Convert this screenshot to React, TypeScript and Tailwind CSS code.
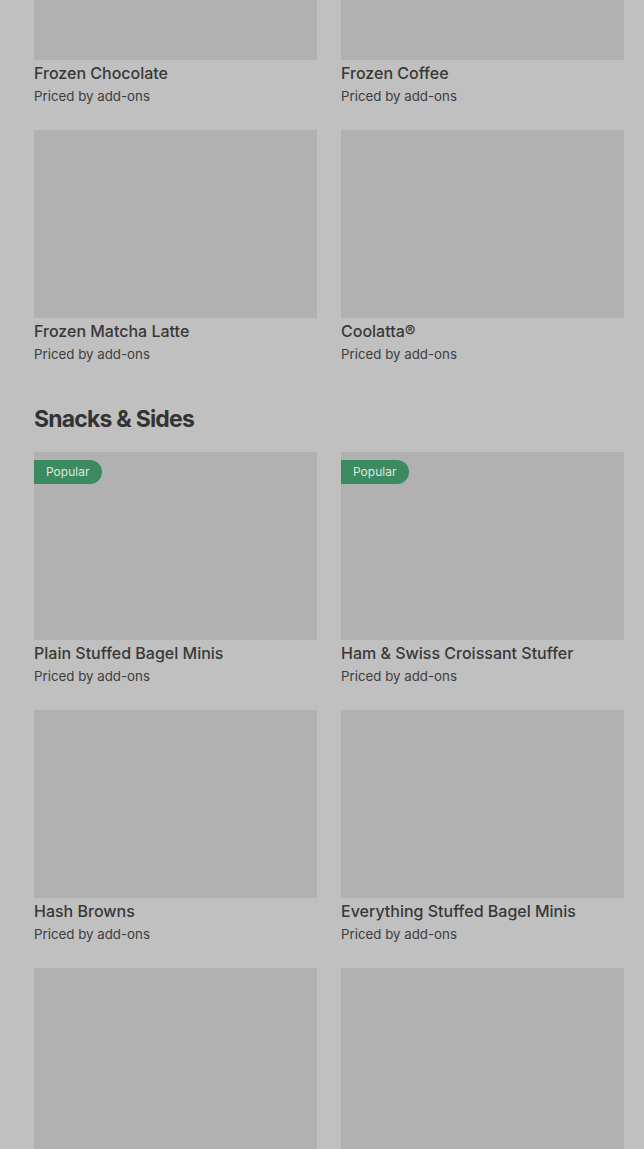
import React from "react";

type Item = { name?: string; popular?: boolean };

const Card = ({ item }: { item: Item }) => (
  <div className="flex flex-col">
    <div className="relative h-[188px] bg-[#b1b1b1]">
      {item.popular && (
        <div className="absolute left-0 top-[8px] flex h-[24px] w-[68px] items-center rounded-r-full bg-[#3c8a5f] pl-[12px] text-[12px] leading-none text-[#dbe9df]">
          Popular
        </div>
      )}
    </div>
    {item.name && (
      <>
        <div className="mt-px text-[16px] font-medium leading-6 text-[#383838]">{item.name}</div>
        <div className="mt-px text-[13.3px] leading-5 text-[#3d3d3d]">Priced by add-ons</div>
      </>
    )}
  </div>
);

const Grid = ({ items }: { items: Item[] }) => (
  <div className="grid grid-cols-2 gap-x-6 gap-y-6">
    {items.map((it, i) => (
      <Card key={i} item={it} />
    ))}
  </div>
);

export default function App() {
  return (
    <div
      className="h-[1149px] overflow-hidden bg-[#c0c0c0] pl-[34px] pr-[20px]"
      style={{ fontFamily: "Inter, 'Noto Sans', sans-serif" }}
    >
      <div className="-mt-[128px]">
        <Grid
          items={[
            { name: "Frozen Chocolate" },
            { name: "Frozen Coffee" },
            { name: "Frozen Matcha Latte" },
            { name: "Coolatta®" },
          ]}
        />
        <h2 className="pt-[39px] pb-[17px] text-[23px] font-bold leading-8 tracking-[-0.8px] text-[#333333]">
          Snacks &amp; Sides
        </h2>
        <Grid
          items={[
            { name: "Plain Stuffed Bagel Minis", popular: true },
            { name: "Ham & Swiss Croissant Stuffer", popular: true },
            { name: "Hash Browns" },
            { name: "Everything Stuffed Bagel Minis" },
            {},
            {},
          ]}
        />
      </div>
    </div>
  );
}
